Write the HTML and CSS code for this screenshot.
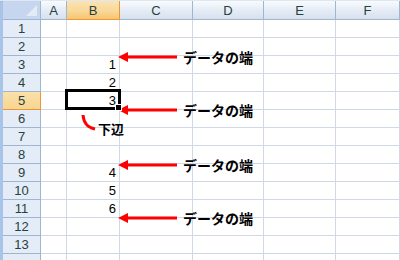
FILE: index.html
```html
<!DOCTYPE html>
<html lang="ja">
<head>
    <meta charset="UTF-8">
    <title>データの端</title>
    <link rel="stylesheet" href="styles.css">
</head>
<body>

<div class="sheet">
    <div class="grid">
        <!-- Kopfzeile -->
        <div class="corner"><span class="corner-tri"></span></div>
        <div class="col-head">A</div>
        <div class="col-head sel">B</div>
        <div class="col-head">C</div>
        <div class="col-head">D</div>
        <div class="col-head">E</div>
        <div class="col-head">F</div>

        <div class="row-head">1</div><div class="cell"></div><div class="cell"></div><div class="cell"></div><div class="cell"></div><div class="cell"></div><div class="cell"></div>
        <div class="row-head">2</div><div class="cell"></div><div class="cell"></div><div class="cell"></div><div class="cell"></div><div class="cell"></div><div class="cell"></div>
        <div class="row-head">3</div><div class="cell"></div><div class="cell num">1</div><div class="cell"></div><div class="cell"></div><div class="cell"></div><div class="cell"></div>
        <div class="row-head">4</div><div class="cell"></div><div class="cell num">2</div><div class="cell"></div><div class="cell"></div><div class="cell"></div><div class="cell"></div>
        <div class="row-head sel">5</div><div class="cell"></div><div class="cell num active">3<span class="handle"></span></div><div class="cell"></div><div class="cell"></div><div class="cell"></div><div class="cell"></div>
        <div class="row-head">6</div><div class="cell"></div><div class="cell"></div><div class="cell"></div><div class="cell"></div><div class="cell"></div><div class="cell"></div>
        <div class="row-head">7</div><div class="cell"></div><div class="cell"></div><div class="cell"></div><div class="cell"></div><div class="cell"></div><div class="cell"></div>
        <div class="row-head">8</div><div class="cell"></div><div class="cell"></div><div class="cell"></div><div class="cell"></div><div class="cell"></div><div class="cell"></div>
        <div class="row-head">9</div><div class="cell"></div><div class="cell num">4</div><div class="cell"></div><div class="cell"></div><div class="cell"></div><div class="cell"></div>
        <div class="row-head">10</div><div class="cell"></div><div class="cell num">5</div><div class="cell"></div><div class="cell"></div><div class="cell"></div><div class="cell"></div>
        <div class="row-head">11</div><div class="cell"></div><div class="cell num">6</div><div class="cell"></div><div class="cell"></div><div class="cell"></div><div class="cell"></div>
        <div class="row-head">12</div><div class="cell"></div><div class="cell"></div><div class="cell"></div><div class="cell"></div><div class="cell"></div><div class="cell"></div>
        <div class="row-head">13</div><div class="cell"></div><div class="cell"></div><div class="cell"></div><div class="cell"></div><div class="cell"></div><div class="cell"></div>
        <div class="row-head"></div><div class="cell"></div><div class="cell"></div><div class="cell"></div><div class="cell"></div><div class="cell"></div><div class="cell"></div>
    </div>

    <!-- Pfeile und Beschriftungen -->
    <svg class="arrows" width="400" height="260" viewBox="0 0 400 260">
        <g fill="#f00" stroke="#f00">
            <line x1="126" y1="56" x2="177" y2="56" stroke-width="3"/>
            <polygon points="118,56 128,51 128,61" stroke="none"/>
            <line x1="126" y1="109" x2="177" y2="109" stroke-width="3"/>
            <polygon points="118,109 128,104 128,114" stroke="none"/>
            <line x1="126" y1="164" x2="177" y2="164" stroke-width="3"/>
            <polygon points="118,164 128,159 128,169" stroke="none"/>
            <line x1="126" y1="217" x2="177" y2="217" stroke-width="3"/>
            <polygon points="118,217 128,212 128,222" stroke="none"/>
        </g>
        <path d="M83 114 Q84 126 95 128" fill="none" stroke="#f00" stroke-width="3"/>
    </svg>

    <span class="note n1">データの端</span>
    <span class="note n2">データの端</span>
    <span class="note n3">データの端</span>
    <span class="note n4">データの端</span>
    <span class="note small">下辺</span>
</div>

</body>
</html>
```

FILE: styles.css
```css
/* Allgemein */
body {
    margin: 0;
    padding: 0;
    background-color: #fff;
    overflow: hidden;
    font-family: 'Liberation Sans', 'DejaVu Sans', sans-serif;
}

.sheet {
    position: relative;
    width: 400px;
    height: 260px;
    overflow: hidden;
    border-top: 1px solid #dfe7f2;
    box-sizing: border-box;
}

.grid {
    display: grid;
    grid-template-columns: 38px 26px 53px 73px 71px 72px 1fr;
    grid-auto-rows: 18px;
    padding-left: 3px;
    border-top: 1px solid #a3bcdc;
    background: linear-gradient(to right, #a9c4e9 0, #a9c4e9 3px, #fff 3px);
}

.grid > div {
    box-sizing: border-box;
    border-right: 1px solid #d0d7e5;
    border-bottom: 1px solid #d0d7e5;
}

/* Kopfzellen */
.corner {
    height: 19px;
    position: relative;
    background-color: #c5d6ee;
    border-right: 1px solid #9eb6ce !important;
    border-bottom: 1px solid #9eb6ce !important;
}

.corner-tri {
    position: absolute;
    right: 3px;
    bottom: 3px;
    width: 0;
    height: 0;
    border-left: 11px solid transparent;
    border-bottom: 11px solid #e3ebf6;
}

.col-head {
    height: 19px;
    background: linear-gradient(#f9fbfd, #e4ebf5 55%, #d6e0ee);
    border-right: 1px solid #9eb6ce !important;
    border-bottom: 1px solid #9eb6ce !important;
    color: #27413e;
    font-size: 13px;
    line-height: 19px;
    text-align: center;
}

.col-head.sel {
    background: linear-gradient(#fbe3b3, #f9d899 55%, #f5c66f);
    border-bottom: 1px solid #f29436 !important;
    border-right: 1px solid #f29436 !important;
}

.row-head {
    background-color: #e4ecf7;
    border-right: 1px solid #9eb6ce !important;
    border-bottom: 1px solid #9eb6ce !important;
    color: #27413e;
    font-size: 13px;
    line-height: 18px;
    text-align: center;
}

.grid > div:nth-child(-n+7) {
    margin-top: -1px;
}

.row-head.sel {
    background: linear-gradient(#fbe0a9, #f8d592);
    border-bottom: 1px solid #f29436 !important;
    border-right: 1px solid #f29436 !important;
}

/* Zellen */
.cell.num {
    color: #000;
    font-size: 13px;
    line-height: 18px;
    text-align: right;
    padding-right: 3px;
}

.cell.active {
    position: relative;
}

.cell.active::after {
    content: '';
    position: absolute;
    top: -3px;
    left: -2px;
    right: -2px;
    bottom: -1px;
    border: 3px solid #000;
}

.handle {
    position: absolute;
    right: -3px;
    bottom: -2px;
    width: 5px;
    height: 5px;
    background-color: #000;
    border: 1px solid #fff;
    z-index: 2;
}

/* Beschriftungen */
.arrows {
    position: absolute;
    top: 0;
    left: 0;
}

.note {
    position: absolute;
    left: 183px;
    font-family: 'Noto Sans CJK JP', sans-serif;
    font-weight: bold;
    font-size: 14px;
    line-height: 18px;
    color: #000;
}

.n1 { top: 47px; }
.n2 { top: 100px; }
.n3 { top: 155px; }
.n4 { top: 208px; }

.note.small {
    left: 98px;
    top: 119px;
    font-size: 13px;
}
```
